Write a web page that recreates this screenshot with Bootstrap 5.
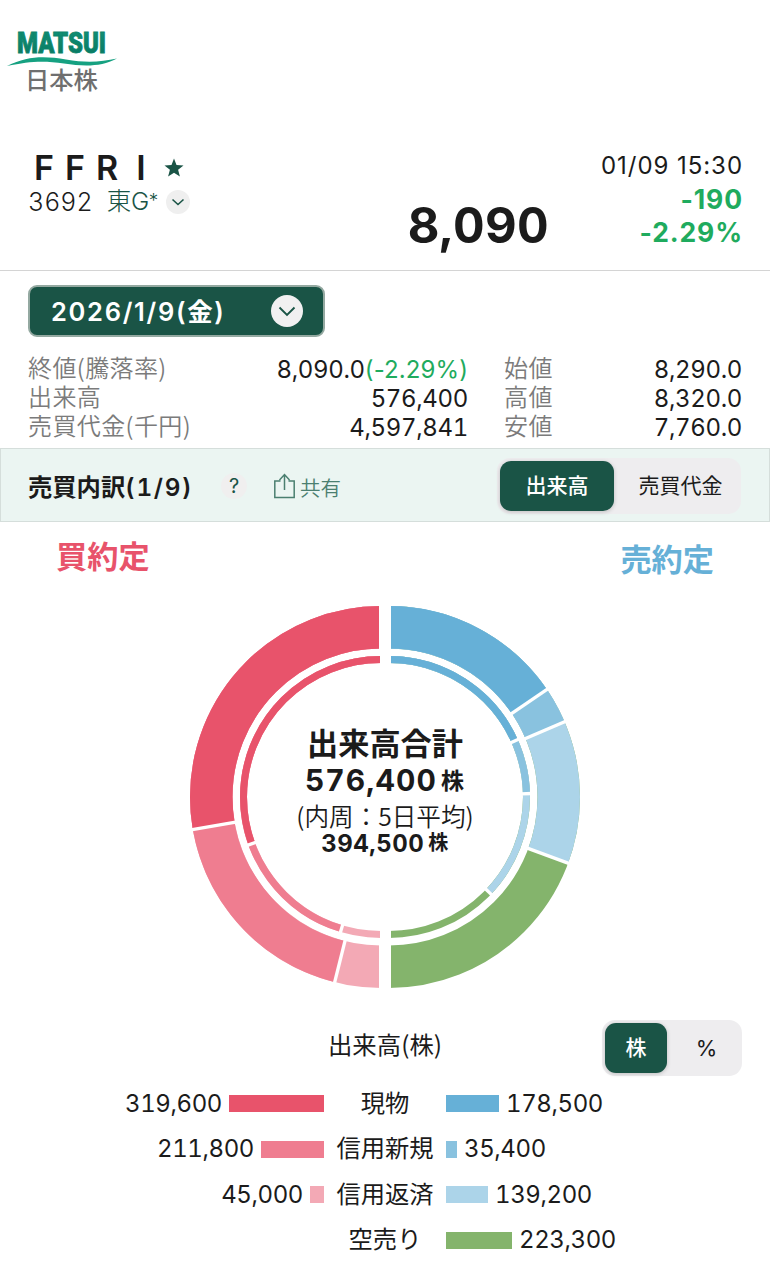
<!DOCTYPE html>
<html lang="ja">
<head>
<meta charset="utf-8">
<meta name="viewport" content="width=device-width, initial-scale=1">
<title>MATSUI 日本株</title>
<link href="https://cdn.jsdelivr.net/npm/bootstrap@5.3.0/dist/css/bootstrap.min.css" rel="stylesheet">
<style>
:root{--deep:#1a5446;--ink:#1b1b1b;--up:#1fab5e;--jp:"Noto Sans CJK JP",sans-serif;--num:Inter,"Noto Sans CJK JP",sans-serif}
body{font-family:var(--num);color:var(--ink);width:770px;height:1280px;overflow:hidden;background:#fff;font-size:24px;line-height:1;font-feature-settings:"tnum"}
svg{display:block;overflow:visible}
.prop{font-feature-settings:normal}
.brand-area{height:128px;padding:24px 0 0 6px}
.brand-sub{font:500 24.3px/30px var(--jp);color:#6f6f6f;padding-left:19px;margin-top:-3px}
.quote{height:143px;border-bottom:1px solid #d4d4d4;padding:20px 28px 0}
.quote-name{height:38px;font-size:34px;font-weight:600;line-height:38px;letter-spacing:11px;padding:2px 0 0 6px}
.quote-name .wide{letter-spacing:18px}
.quote-code{height:30px;font-size:25px;font-weight:300;line-height:30px;padding-top:2px}
.market{color:var(--deep);font-weight:300;margin-left:14px;font-size:24.5px;letter-spacing:-.3px}
.market small{font-size:19px;position:relative;top:-3px}
.round-s{width:24px;height:24px;background:#efefef;border-radius:50%}
.last-price{font-size:49px;font-weight:700;line-height:58px;letter-spacing:.3px;padding-top:1px}
.stamp-col{width:193px}
.stamp{font-size:24px;line-height:35px;letter-spacing:.95px;margin-right:-1px}
.delta{font-size:26.5px;font-weight:700;line-height:33px;color:var(--up);letter-spacing:.9px;margin-right:-1px}
.date-btn{width:297px;height:52px;margin:14px 0 0 28px;background:var(--deep);border:2px solid #94a9a1;border-radius:9px;color:#fff;font-size:25.5px;font-weight:600;padding:2px 20px 0 21px;letter-spacing:1.7px}
.round-m{width:32px;height:32px;background:#f1f0f1;border-radius:50%;margin-top:-2px}
.facts{margin:18px 28px 0;height:93px;line-height:29px;font-size:24px;letter-spacing:-.35px}
.facts .lbl{font-family:var(--jp);font-weight:350;color:#7b7b7b;letter-spacing:.4px;margin-top:-3px}
.facts .r1{width:440px}.facts .r2{width:238px}
.section-bar{height:74px;background:#ebf5f2;border:1px solid #d5dedb;padding:2px 28px 0 27px}
.sec-title{font-size:24.3px;font-weight:600;width:193px;padding-top:2px}
.sec-title span{letter-spacing:1.7px}
.help{width:26px;height:26px;border-radius:50%;background:#f0efef;font-size:20px;font-weight:400;color:var(--deep)}
.share{color:#4b7f70;font:350 20.5px/24px var(--jp);margin-left:27px;padding-top:1px}
.share svg{margin-right:5px;margin-top:-2px}
.switch{height:56px;border-radius:13px;background:#eeedef;padding:3px;font-family:var(--jp);font-size:21px}
.switch>span{padding-bottom:3px}
.switch .on{background:var(--deep);color:#fff;border-radius:11px;box-shadow:0 1px 4px #0003;font-weight:500}
.sides{height:84px;padding:16px 56px 0;font:700 31.2px/34px var(--jp)}
.chart{height:382px}
.chart-text{position:absolute;inset:0;padding-top:118px;text-align:center}
.c1{font:700 31.2px/36px var(--jp)}
.c2{font-size:30px;font-weight:700;line-height:38px;letter-spacing:1.1px;padding-top:1px}
.c3{font:350 24.6px/30px var(--jp);margin-top:-2px}
.c4{font-size:24px;font-weight:700;line-height:28px;letter-spacing:.5px}
.unit{position:relative;top:-2px;margin-left:4px}
.unit-row{height:56px;margin-top:32px;padding:0 28px}
.unit-row .ttl{font:400 24.4px/30px var(--jp);width:770px;left:0;text-align:center}
.bars{margin-top:5px;letter-spacing:-.4px}
.bar-row{height:45.5px}
.bar-l{width:324px;gap:7px}.bar-r{width:324px;gap:7px}
.bar-c{width:122px;font:400 24.3px/30px var(--jp);text-align:center;letter-spacing:0;margin-top:-4px}
.bar-fill{height:17px;margin-top:0}
</style>
</head>
<body>
<header class="brand-area">
  <svg width="112" height="43" viewBox="6 24 112 43">
    <defs><linearGradient id="lg" x1="0" y1="0" x2="0" y2="1"><stop offset="0" stop-color="#139579"/><stop offset="1" stop-color="#08755f"/></linearGradient></defs>
    <text x="17" y="52.500" font-family="Roboto" font-weight="900" font-size="30" textLength="89" lengthAdjust="spacingAndGlyphs" fill="url(#lg)" stroke="#0d866c" stroke-width=".9">MATSUI</text>
    <path d="M7 66C28 55.500 45 56 66 59.500C86 63 101 62 117 58.500C101 67 84 66.500 64 63.500C44 60.500 30 61 7 66Z" fill="#16a181"/>
  </svg>
  <div class="brand-sub">日本株</div>
</header>
<section class="quote d-flex">
  <div>
    <div class="quote-name d-flex align-items-center"><span>FF<span class="wide">R</span>I</span>
      <svg style="margin-left:7px" width="20" height="20" viewBox="0 0 20 20"><path d="M10 .5l2.500 6.400 7 .5-5.400 4.400 1.800 6.800L10 14.800l-5.900 3.800 1.800-6.800L.5 7.400l7-.5z" fill="#1a5446"/></svg></div>
    <div class="quote-code d-flex align-items-center"><span>3692</span><span class="market prop">東G<small>*</small></span>
      <span class="round-s ms-2 d-flex align-items-center justify-content-center"><svg width="14" height="8" viewBox="0 0 14 8"><path d="M1.500 1.500L7 6.500l5.500-5" fill="none" stroke="#1a5446" stroke-width="1.600"/></svg></span></div>
  </div>
  <div class="last-price ms-auto align-self-start mt-5">8,090</div>
  <div class="stamp-col text-end prop">
    <div class="stamp">01/09 15:30</div><div class="delta">-190</div><div class="delta">-2.29%</div>
  </div>
</section>
<button class="date-btn d-flex align-items-center justify-content-between"><span>2026/1/9(金)</span><span class="round-m d-flex align-items-center justify-content-center"><svg width="18" height="11" viewBox="0 0 18 11"><path d="M1.500 1.500L9 9l7.500-7.500" fill="none" stroke="#1a5446" stroke-width="1.900"/></svg></span></button>
<section class="facts d-flex justify-content-between">
  <div class="r1">
    <div class="d-flex justify-content-between"><span class="lbl">終値(騰落率)</span><span>8,090.0<span class="prop" style="color:var(--up);letter-spacing:.1px">(-2.29%)</span></span></div>
    <div class="d-flex justify-content-between"><span class="lbl">出来高</span><span>576,400</span></div>
    <div class="d-flex justify-content-between"><span class="lbl">売買代金(千円)</span><span>4,597,841</span></div>
  </div>
  <div class="r2">
    <div class="d-flex justify-content-between"><span class="lbl">始値</span><span>8,290.0</span></div>
    <div class="d-flex justify-content-between"><span class="lbl">高値</span><span>8,320.0</span></div>
    <div class="d-flex justify-content-between"><span class="lbl">安値</span><span>7,760.0</span></div>
  </div>
</section>
<section class="section-bar d-flex align-items-center">
  <span class="sec-title">売買内訳<span>(1/9)</span></span>
  <span class="help d-flex align-items-center justify-content-center">?</span>
  <span class="share d-flex align-items-center"><svg width="21" height="26" viewBox="0 0 21 26"><path d="M6.500 8H.8v16.500h19.400V8H14.500M10.500 17V2M5.500 7l5-5.500 5 5.500" fill="none" stroke="#4b7f70" stroke-width="1.500"/></svg>共有</span>
  <div class="switch d-flex ms-auto"><span class="on d-flex align-items-center justify-content-center" style="width:114px">出来高</span><span class="d-flex align-items-center justify-content-center" style="width:124px;padding-left:9px">売買代金</span></div>
</section>
<div class="sides d-flex justify-content-between"><span style="color:#e8536b">買約定</span><span style="color:#66b0d7;padding-top:3px">売約定</span></div>
<section class="chart position-relative">
  <svg width="770" height="382" viewBox="0 606 770 382" fill="none">
    <g stroke-width="42.500">
      <path d="M381 627.250A169.750 169.750 0 0 0 381 966.750" stroke="#f3a9b5"/>
      <path d="M381 627.250A169.750 169.750 0 0 0 381 966.750" stroke="#ef7d90" pathLength="180" stroke-dasharray="165.950 200"/>
      <path d="M381 627.250A169.750 169.750 0 0 0 381 966.750" stroke="#e8536b" pathLength="180" stroke-dasharray="99.800 200"/>
      <path d="M389 627.250A169.750 169.750 0 0 1 389 966.750" stroke="#84b46c"/>
      <path d="M389 627.250A169.750 169.750 0 0 1 389 966.750" stroke="#acd4e9" pathLength="180" stroke-dasharray="110.270 200"/>
      <path d="M389 627.250A169.750 169.750 0 0 1 389 966.750" stroke="#89c2df" pathLength="180" stroke-dasharray="66.800 200"/>
      <path d="M389 627.250A169.750 169.750 0 0 1 389 966.750" stroke="#66b0d7" pathLength="180" stroke-dasharray="55.740 200"/>
    </g>
    <g stroke-width="7">
      <path d="M381 659.500A137.500 137.500 0 0 0 381 934.500" stroke="#f3a9b5"/>
      <path d="M381 659.500A137.500 137.500 0 0 0 381 934.500" stroke="#ef7d90" pathLength="180" stroke-dasharray="163.300 200"/>
      <path d="M381 659.500A137.500 137.500 0 0 0 381 934.500" stroke="#e8536b" pathLength="180" stroke-dasharray="109.900 200"/>
      <path d="M389 659.500A137.500 137.500 0 0 1 389 934.500" stroke="#84b46c"/>
      <path d="M389 659.500A137.500 137.500 0 0 1 389 934.500" stroke="#acd4e9" pathLength="180" stroke-dasharray="133.600 200"/>
      <path d="M389 659.500A137.500 137.500 0 0 1 389 934.500" stroke="#89c2df" pathLength="180" stroke-dasharray="88.600 200"/>
      <path d="M389 659.500A137.500 137.500 0 0 1 389 934.500" stroke="#66b0d7" pathLength="180" stroke-dasharray="66 200"/>
    </g>
    <g stroke="#fff" stroke-width="3.300">
      <path d="M0-193V-146" transform="translate(381 797) rotate(-99.800)"/>
      <path d="M0-193V-146" transform="translate(381 797) rotate(-165.950)"/>
      <path d="M0-193V-146" transform="translate(389 797) rotate(55.740)"/>
      <path d="M0-193V-146" transform="translate(389 797) rotate(66.800)"/>
      <path d="M0-193V-146" transform="translate(389 797) rotate(110.270)"/>
      <path d="M0-143V-132" transform="translate(381 797) rotate(-109.900)"/>
      <path d="M0-143V-132" transform="translate(381 797) rotate(-163.300)"/>
      <path d="M0-143V-132" transform="translate(389 797) rotate(66)"/>
      <path d="M0-143V-132" transform="translate(389 797) rotate(88.600)"/>
      <path d="M0-143V-132" transform="translate(389 797) rotate(133.600)"/>
    </g>
    <path d="M379 600h12v400h-12V945h1V650h-1z" fill="#fff"/>
  </svg>
  <div class="chart-text">
    <div class="c1">出来高合計</div>
    <div class="c2">576,400<span class="unit" style="font-size:23px">株</span></div>
    <div class="c3">(内周：5日平均)</div>
    <div class="c4">394,500<span class="unit" style="font-size:20px">株</span></div>
  </div>
</section>
<section class="unit-row position-relative d-flex">
  <div class="ttl position-absolute" style="padding-top:9px">出来高(株)</div>
  <div class="switch d-flex ms-auto position-relative"><span class="on d-flex align-items-center justify-content-center" style="width:62px">株</span><span class="d-flex align-items-center justify-content-center prop" style="width:72px;padding:0 0 0 7px;font-family:var(--num);font-size:22px">%</span></div>
</section>
<section class="bars">
  <div class="bar-row d-flex align-items-center"><div class="bar-l d-flex justify-content-end align-items-center">319,600<div class="bar-fill" style="width:95px;background:#e8536b"></div></div><div class="bar-c">現物</div><div class="bar-r d-flex align-items-center"><div class="bar-fill" style="width:53px;background:#66b0d7"></div>178,500</div></div>
  <div class="bar-row d-flex align-items-center"><div class="bar-l d-flex justify-content-end align-items-center">211,800<div class="bar-fill" style="width:63px;background:#ef7d90"></div></div><div class="bar-c">信用新規</div><div class="bar-r d-flex align-items-center"><div class="bar-fill" style="width:11px;background:#89c2df"></div>35,400</div></div>
  <div class="bar-row d-flex align-items-center"><div class="bar-l d-flex justify-content-end align-items-center">45,000<div class="bar-fill" style="width:14px;background:#f3a9b5"></div></div><div class="bar-c">信用返済</div><div class="bar-r d-flex align-items-center"><div class="bar-fill" style="width:42px;background:#acd4e9"></div>139,200</div></div>
  <div class="bar-row d-flex align-items-center"><div class="bar-l"></div><div class="bar-c">空売り</div><div class="bar-r d-flex align-items-center"><div class="bar-fill" style="width:66px;background:#84b46c"></div>223,300</div></div>
</section>
<script src="https://cdn.jsdelivr.net/npm/bootstrap@5.3.0/dist/js/bootstrap.bundle.min.js"></script>
</body>
</html>
